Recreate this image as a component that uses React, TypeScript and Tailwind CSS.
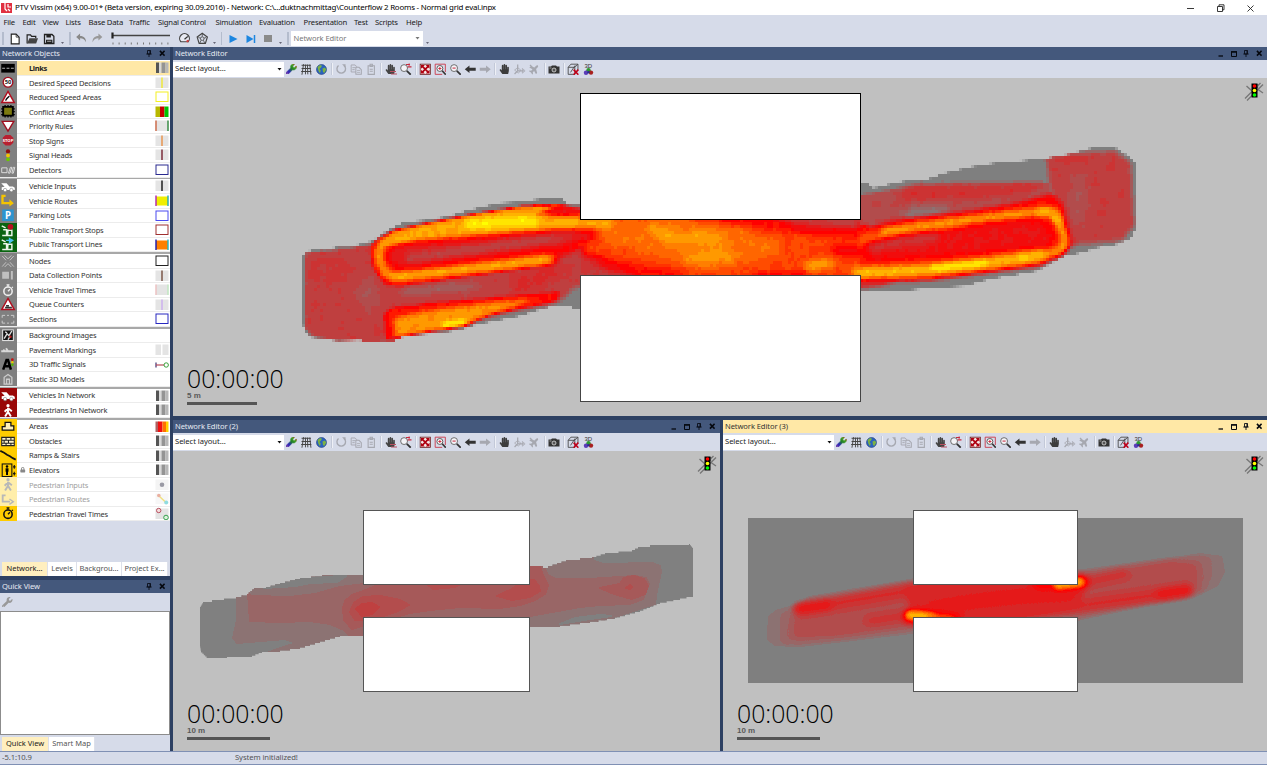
import React from "react";
import { FaWrench, FaHandPaper, FaCamera, FaPlane, FaLock } from "react-icons/fa";

type Pt = [number, number];

const gray = (v: number) => {
  const c = Math.round(v * 255);
  return `rgb(${c},${c},${c})`;
};
const pts = (p: Pt[]) => p.map((q) => q.join(",")).join(" ");

/* 21-step ramp: grey, red, orange, yellow */
const steps = Array.from({ length: 21 }, (_, i) => i / 20);
const rampR = steps.map((v) => (v < 0.5 ? 0.5 + v : 1).toFixed(3)).join(" ");
const rampG = steps.map((v) => (v < 0.5 ? 0.5 - v : (v - 0.5) * 2).toFixed(3)).join(" ");
const rampB = steps.map((v) => (v < 0.5 ? 0.5 - v : 0).toFixed(3)).join(" ");

const Ramp = () => (
  <feComponentTransfer>
    <feFuncR type="discrete" tableValues={rampR} />
    <feFuncG type="discrete" tableValues={rampG} />
    <feFuncB type="discrete" tableValues={rampB} />
  </feComponentTransfer>
);

function SharedDefs() {
  return (
    <svg width="0" height="0" className="absolute" aria-hidden="true">
      <defs>
        <filter id="ramp" filterUnits="userSpaceOnUse" x="170" y="70" width="1100" height="690" colorInterpolationFilters="sRGB">
          <Ramp />
        </filter>
        <filter id="noisyRamp" filterUnits="userSpaceOnUse" x="170" y="70" width="1100" height="350" colorInterpolationFilters="sRGB">
          <feTurbulence type="fractalNoise" baseFrequency="0.11" numOctaves="3" seed="4" />
          <feColorMatrix values="1 0 0 0 0  1 0 0 0 0  1 0 0 0 0  0 0 0 0 1" result="noise" />
          <feComposite in="SourceGraphic" in2="noise" operator="arithmetic" k1="0" k2="1" k3="0.09" k4="-0.045" />
          <feColorMatrix values="1 0 0 0 0  0 1 0 0 0  0 0 1 0 0  0 0 0 0 1" />
          <Ramp />
        </filter>
        <filter id="cells" filterUnits="userSpaceOnUse" x="173" y="78" width="1092" height="336" colorInterpolationFilters="sRGB">
          <feFlood x="174" y="79" width="1" height="1" floodColor="#000" />
          <feComposite x="173" y="78" width="3" height="3" />
          <feTile result="grid" />
          <feComposite in="SourceGraphic" in2="grid" operator="in" />
          <feMorphology operator="dilate" radius="1" />
        </filter>
        {[1, 2, 3, 5].map((n) => (
          <filter key={n} id={`b${n}`} filterUnits="userSpaceOnUse" x="170" y="70" width="1100" height="690" colorInterpolationFilters="sRGB">
            <feGaussianBlur stdDeviation={n} />
          </filter>
        ))}
        <linearGradient id="rainbow" x1="0" y1="1" x2="1" y2="0">
          <stop offset="0" stopColor="#7a30a0" />
          <stop offset="0.3" stopColor="#2828b8" />
          <stop offset="0.55" stopColor="#20802a" />
          <stop offset="0.75" stopColor="#40a020" />
          <stop offset="1" stopColor="#d02020" />
        </linearGradient>
      </defs>
    </svg>
  );
}

const mainOutline: Pt[] = [
  [303, 256], [306, 252], [312, 250], [330, 249], [336, 247], [357, 245], [372, 241], [377, 238], [388, 230], [404, 222], [426, 220], [450, 216], [465, 211], [482, 207], [499, 203], [515, 202], [540, 199], [563, 199], [568, 204], [581, 205],
  [640, 200], [860, 183], [868, 184], [874, 188], [890, 184], [905, 181], [928, 179], [945, 173], [970, 167], [995, 163], [1020, 161], [1048, 158], [1070, 154], [1084, 150], [1095, 147], [1114, 147], [1121, 151], [1129, 157], [1134, 162], [1137, 165],
  [1137, 226], [1131, 238], [1115, 245], [1095, 248], [1085, 252], [1065, 256], [1050, 264], [1037, 271], [1015, 275], [990, 279], [965, 286], [920, 289], [902, 291], [860, 291], [581, 308], [572, 308], [570, 305], [553, 306], [535, 311], [520, 316], [500, 320], [475, 325], [460, 330], [440, 333], [405, 336], [392, 342], [365, 342], [360, 340], [338, 341], [310, 337], [305, 331], [303, 325],
];

const P = ({ p, v, b }: { p: Pt[]; v: number; b?: number }) => (
  <polygon points={pts(p)} fill={gray(v)} filter={b ? `url(#b${b})` : undefined} />
);
const L = ({ d, v, w, b }: { d: string; v: number; w: number; b?: number }) => (
  <path d={d} fill="none" stroke={gray(v)} strokeWidth={w} strokeLinecap="round" strokeLinejoin="round" filter={b ? `url(#b${b})` : undefined} />
);
const E = ({ x, y, rx, ry, v, b, r = 0 }: { x: number; y: number; rx: number; ry: number; v: number; b?: number; r?: number }) => (
  <g filter={b ? `url(#b${b})` : undefined}>
    <ellipse cx={x} cy={y} rx={rx} ry={ry} fill={gray(v)} transform={`rotate(${r} ${x} ${y})`} />
  </g>
);

function MainHeat() {
  return (
    <svg className="block h-full w-full" shapeRendering="crispEdges">
      <g transform="translate(-173 -78)">
        <clipPath id="mainClip"><polygon points={pts(mainOutline)} /></clipPath>
        <g filter="url(#cells)">
          <g clipPath="url(#mainClip)">
            <g filter="url(#noisyRamp)">
              <rect x="173" y="78" width="1094" height="338" fill={gray(0)} />
              {/* left pad */}
              <P b={1} v={0.27} p={[[305, 253], [335, 250], [380, 243], [410, 341], [368, 343], [338, 341], [312, 336], [305, 328]]} />
              <E b={5} v={0.3} x={330} y={272} rx={20} ry={14} />
              {/* left room interior */}
              <P b={2} v={0.27} p={[[375, 245], [560, 210], [581, 207], [581, 283], [565, 298], [553, 304], [395, 336], [380, 336]]} />
              <E b={5} v={0.2} x={368} y={292} rx={11} ry={16} />
              <L b={5} v={0.36} w={16} d="M520 286L575 262" />
              <L b={3} v={0.1} w={6} d="M405 291L475 286" />
              {/* upper lane */}
              <P b={1} v={0.52} p={[[370, 248], [376, 240], [393, 230], [433, 222], [473, 214], [523, 206], [562, 204], [585, 212], [585, 244], [555, 264], [470, 276], [400, 286], [384, 284], [373, 268]]} />
              <L b={2} v={0.76} w={9} d="M386 242Q376 250 380 262Q385 276 398 277L460 270L520 263L550 259" />
              <L b={2} v={0.82} w={5} d="M392 277L460 270L545 259" />
              <P b={1} v={0.74} p={[[378, 243], [395, 231], [433, 223], [473, 215], [523, 207], [562, 205], [540, 212], [500, 220], [440, 232], [390, 246]]} />
              <P b={2} v={0.81} p={[[378, 246], [396, 233], [433, 224], [480, 216], [520, 210], [545, 206], [535, 214], [585, 218], [600, 229], [530, 231], [480, 235], [420, 240], [390, 245]]} />
              <L b={3} v={0.98} w={8} d="M468 225Q490 222 535 221" />
              <L b={2} v={0.42} w={5} d="M552 213L581 210" />
              <P b={3} v={0.4} p={[[388, 253], [398, 246], [450, 242], [500, 238], [575, 231], [583, 240], [500, 252], [420, 263], [394, 266]]} />
              <L b={3} v={0.22} w={8} d="M410 258L500 246L560 238" />
              {/* lower lane */}
              <P b={1} v={0.52} p={[[386, 340], [384, 314], [392, 308], [430, 303], [480, 299], [520, 295], [560, 292], [557, 301], [520, 309], [490, 314], [467, 325], [423, 332], [393, 337]]} />
              <P b={2} v={0.77} p={[[395, 337], [394, 318], [420, 312], [475, 304], [535, 299], [505, 310], [485, 316], [465, 325], [420, 333]]} />
              <L b={2} v={1} w={5} d="M443 325L464 322" />
              <E b={3} v={0} x={578} y={298} rx={8} ry={11} />
              {/* passage */}
              <P b={3} v={0.62} p={[[578, 214], [868, 218], [868, 280], [583, 284]]} />
              <P b={5} v={0.7} p={[[590, 216], [670, 217], [740, 228], [785, 243], [770, 258], [710, 270], [660, 258], [610, 246]]} />
              <L b={3} v={0.84} w={8} d="M560 223L610 223" />
              <L b={5} v={0.82} w={12} d="M655 230L670 238L720 239" />
              <L b={5} v={0.8} w={12} d="M690 258L730 254" />
              <L b={3} v={0.82} w={9} d="M808 266L830 264" />
              <P b={3} v={0.28} p={[[765, 213], [862, 213], [862, 230], [800, 230]]} />
              <L b={3} v={0.48} w={7} d="M725 219L800 228L860 236" />
              <P b={5} v={0.28} p={[[560, 252], [595, 258], [650, 282], [560, 286]]} />
              <L b={3} v={0.48} w={7} d="M600 264L680 275" />
              <E b={3} v={0.38} x={574} y={236} rx={22} ry={5} />
              <L b={2} v={0.48} w={5} d="M755 275L805 273" />
              <L b={3} v={0.44} w={9} d="M836 250L866 251" />
              {/* right room */}
              <P b={1} v={0.22} p={[[860, 195], [905, 187], [915, 185], [1000, 183], [1050, 183], [1052, 210], [860, 225]]} />
              <P b={3} v={0.32} p={[[902, 189], [918, 185], [1045, 183], [1030, 194], [950, 200], [900, 201]]} />
              <E b={3} v={0} x={925} y={213} rx={25} ry={4} r={-6} />
              <P b={2} v={0.27} p={[[1046, 157], [1075, 153], [1115, 151], [1131, 162], [1134, 226], [1121, 241], [1072, 245], [1060, 212], [1049, 183]]} />
              <E b={5} v={0.19} x={1078} y={200} rx={8} ry={28} />
              <L b={2} v={0.33} w={5} d="M1055 160L1085 158" />
              <P b={2} v={0.52} p={[[860, 228], [900, 219], [970, 211], [1020, 202], [1052, 194], [1063, 204], [1067, 222], [1073, 244], [1065, 254], [1040, 266], [990, 272], [930, 280], [860, 283]]} />
              <L b={3} v={0.7} w={9} d="M862 240L900 232L960 224" />
              <L b={2} v={0.78} w={8} d="M885 232L930 225L1000 216L1043 211Q1055 209 1058 219L1064 238Q1066 249 1050 253L1020 259" />
              <L b={2} v={0.83} w={8} d="M1040 213Q1053 210 1057 220" />
              <L b={3} v={0.86} w={12} d="M858 273L930 270L990 263L1040 255" />
              <L b={2} v={0.95} w={5} d="M932 268L985 263" />
              <P b={3} v={0.43} p={[[868, 246], [900, 236], [985, 226], [1040, 221], [1052, 239], [1046, 246], [950, 254], [872, 258]]} />
              <L b={3} v={0.28} w={7} d="M872 247L935 237" />
              <L b={2} v={0.4} w={6} d="M860 285L885 282" />
            </g>
          </g>
        </g>
        <rect x="580.5" y="93.5" width="279.500" height="125.500" fill="#fff" stroke="#000" />
        <rect x="580.5" y="275.5" width="279.500" height="126" fill="#fff" stroke="#444" />
      </g>
    </svg>
  );
}

/* resample a closed outline into cell-sized stairs */
function stairs(p: Pt[], cell: number): Pt[] {
  const out: Pt[] = [];
  p.forEach((a, i) => {
    const b = p[(i + 1) % p.length];
    const n = Math.max(1, Math.round(Math.abs(b[1] - a[1]) / cell));
    for (let k = 0; k < n; k++) {
      const x0 = a[0] + ((b[0] - a[0]) * k) / n;
      const x1 = a[0] + ((b[0] - a[0]) * (k + 1)) / n;
      const y0 = a[1] + ((b[1] - a[1]) * k) / n;
      out.push([x0, y0], [x1, y0]);
    }
  });
  return out;
}

const densOutline: Pt[] = [[200, 607], [203, 602], [212, 600], [236, 597], [247, 594], [254, 588], [266, 587], [280, 583], [300, 578], [322, 575], [364, 574], [364, 580], [530, 580], [530, 566], [543, 568], [548, 566], [566, 560], [580, 558], [592, 557], [605, 553], [632, 550], [638, 547], [650, 545], [689, 544], [693, 549], [693, 597], [680, 600], [660, 604], [640, 612], [615, 619], [590, 623], [560, 627], [530, 627], [530, 620], [364, 620], [364, 636], [349, 636], [340, 637], [320, 643], [300, 649], [280, 652], [262, 653], [252, 657], [227, 658], [208, 658], [201, 651], [200, 645]];

function DensityHeat() {
  const poly = (fill: string, p: Pt[]) => <polygon fill={fill} points={pts(p)} stroke={fill} strokeWidth="2" strokeLinejoin="round" />;
  return (
    <svg className="block h-full w-full" shapeRendering="crispEdges">
      <g transform="translate(-173 -451)">
        <clipPath id="densClip"><polygon points={pts(stairs(densOutline, 1.35))} /></clipPath>
        <g clipPath="url(#densClip)">
          <rect x="195" y="540" width="500" height="125" fill="#808080" />
          {poly("#8c7373", [[237, 597], [247, 593], [256, 587], [290, 577], [322, 573], [366, 572], [530, 560], [592, 556], [594, 561], [604, 564], [652, 563], [660, 566], [661, 572], [657, 590], [655, 604], [600, 622], [560, 629], [364, 637], [280, 655], [262, 655], [280, 648], [297, 643], [285, 639], [237, 643], [233, 638], [237, 620]])}
          {poly("#808080", [[262, 587], [290, 580], [320, 577], [346, 576], [337, 582], [310, 583], [296, 586], [264, 588]])}
          {poly("#808080", [[560, 624], [575, 618], [600, 615], [611, 616], [590, 619]])}
          {poly("#996666", [[248, 592], [251, 596], [290, 597], [315, 594], [340, 587], [364, 584], [530, 560], [544, 567], [548, 575], [556, 579], [590, 579], [635, 576], [646, 578], [649, 584], [643, 599], [630, 604], [600, 605], [580, 607], [530, 616], [500, 621], [364, 637], [350, 636], [344, 630], [330, 624], [310, 621], [280, 622], [250, 621]])}
          {poly("#a65959", [[343, 608], [345, 601], [352, 595], [366, 590], [380, 584], [530, 560], [540, 567], [543, 575], [548, 585], [545, 594], [535, 600], [520, 605], [500, 608], [460, 607], [430, 610], [410, 613], [385, 620], [364, 625], [352, 629], [344, 620]])}
          {poly("#a65959", [[600, 588], [620, 584], [624, 578], [634, 576], [644, 579], [648, 586], [645, 594], [632, 599], [614, 594]])}
          {poly("#b34d4d", [[350, 612], [354, 603], [363, 597], [380, 596], [400, 600], [409, 605], [398, 611], [380, 617], [366, 620], [355, 620]])}
          {poly("#b34d4d", [[497, 596], [512, 589], [524, 580], [534, 580], [539, 586], [540, 591], [530, 597], [512, 600]])}
          {poly("#bf4040", [[356, 609], [362, 604], [372, 603], [379, 607], [372, 614], [362, 616]])}
          {poly("#b34d4d", [[626, 588], [630, 585], [632, 587], [630, 589]])}
          <path d="M425 584h38l-8 4-22 2z" fill="#b34d4d" />
        </g>
        <rect x="363.5" y="510.5" width="166" height="73.500" fill="#fff" stroke="#555" />
        <rect x="363.5" y="617.5" width="166" height="74" fill="#fff" stroke="#555" />
      </g>
    </svg>
  );
}

function SpeedHeat() {
  return (
    <svg className="block h-full w-full">
      <g transform="translate(-723 -451)">
        <clipPath id="spClip"><rect x="748" y="518" width="495" height="165" /></clipPath>
        <g clipPath="url(#spClip)">
          <g filter="url(#ramp)">
            <rect x="740" y="510" width="510" height="180" fill={gray(0.02)} />
            <P b={1} v={0.09} p={[[767, 640], [768, 616], [776, 610], [800, 603], [810, 596], [913, 579], [1078, 570], [1180, 557], [1200, 553], [1222, 556], [1225, 572], [1218, 586], [1195, 597], [1150, 604], [1078, 621], [913, 634], [800, 647], [775, 646]]} />
            <P b={2} v={0.14} p={[[782, 640], [782, 616], [798, 606], [913, 582], [1078, 573], [1190, 557], [1209, 559], [1210, 575], [1203, 592], [1078, 617], [913, 629], [800, 643], [785, 643]]} />
            <P b={3} v={0.23} p={[[793, 638], [795, 608], [830, 600], [913, 584], [1078, 576], [1170, 561], [1197, 564], [1198, 590], [1170, 598], [1078, 613], [913, 626], [840, 636]]} />
            <L b={3} v={0.34} w={12} d="M803 609L913 590L1000 582" />
            <L b={3} v={0.43} w={8} d="M798 609L828 605" />
            <L b={3} v={0.32} w={8} d="M870 621L915 614" />
            <L b={3} v={0.34} w={12} d="M1185 591L1078 606L1000 616" />
            <L b={3} v={0.43} w={8} d="M1160 594L1188 590" />
            <L b={3} v={0.32} w={8} d="M1080 584L1125 574" />
            <P b={3} v={0.38} p={[[905, 588], [960, 580], [1080, 580], [1085, 592], [1078, 606], [1000, 621], [913, 620]]} />
            <L b={3} v={0.43} w={6} d="M930 609Q990 596 1070 594" />
            <L b={3} v={0.52} w={13} d="M909 617L955 619" />
            <L b={3} v={0.52} w={13} d="M1083 582L1038 583" />
            <L b={2} v={0.84} w={9} d="M910 615Q922 615 932 618" />
            <L b={2} v={0.8} w={9} d="M1080 582L1058 585" />
            <L b={2} v={0.68} w={5} d="M930 617L950 619" />
          </g>
        </g>
        <g shapeRendering="crispEdges">
          <rect x="913.5" y="510.5" width="164" height="73.500" fill="#fff" stroke="#555" />
          <rect x="913.5" y="617.5" width="164" height="74" fill="#fff" stroke="#555" />
        </g>
      </g>
    </svg>
  );
}

/* ---------- toolbar glyphs ---------- */
const G = ({ children, s = 12.5 }: { children: React.ReactNode; s?: number }) => (
  <svg width={s} height={s} viewBox="0 0 16 16" fill="none">{children}</svg>
);

const Magnifier = ({ children }: { children?: React.ReactNode }) => (
  <G>
    <circle cx="6.5" cy="6.5" r="4.4" fill="#f4f4f8" stroke="#666" strokeWidth="1.2" />
    <path d="M10 10l5 5" stroke="#333" strokeWidth="2.2" />
    {children}
  </G>
);

const Sep = () => <span className="mx-[1.6px] h-[12px] w-[1px] shrink-0 bg-[#c3c9d8] shadow-[1px_0_0_#eef0f6]" />;
const Slot = ({ children }: { children: React.ReactNode }) => (
  <span className="flex w-[15.1px] shrink-0 items-center justify-center">{children}</span>
);

function EditorToolbar() {
  return (
    <div className="flex h-[18px] shrink-0 items-center bg-[#d6dbe9]">
      <div className="flex h-[15px] w-[111px] shrink-0 items-center justify-between bg-white pl-[2px] pr-[2px] text-[#222]">
        <span className="text-[7.6px] tracking-[-0.04px]">Select layout...</span>
        <svg width="5" height="3" viewBox="0 0 5 3"><path d="M.5 0h4L2.500 2.500z" fill="#111" /></svg>
      </div>
      <Slot><FaWrench size={10.5} style={{ fill: "url(#rainbow)", stroke: "url(#rainbow)", strokeWidth: 30 }} /></Slot>
      <Slot><G><path d="M2 3h12M2 7h12M1.500 11h13" stroke="#444" strokeWidth="1.300" /><path d="M4.500 1.500L2.500 15M7 2v12.500M9.500 2l.5 12.500M12.500 2l1.500 13" stroke="#444" strokeWidth="1.200" /></G></Slot>
      <Slot><svg width="11" height="11" viewBox="0 0 11 11"><circle cx="5.500" cy="5.500" r="5" fill="#2a62c0" stroke="#24407c" strokeWidth=".6" /><path d="M1.500 3L4 1l2 .7-1 1.800L3.500 5l1.200 1.500-.7 2.700L2.500 7zM6.500 4.500l2.500-1 1.200 2-1.700 3.300L7 8.200z" fill="#7cb244" /></svg></Slot>
      <Sep />
      <Slot><G><path d="M4.500 3.200A5.500 5.500 0 1 0 11.500 3.200" stroke="#a6a8b0" strokeWidth="1.700" /><path d="M9 1.500h4.500v4.500z" fill="#a6a8b0" /></G></Slot>
      <Slot><G><path d="M1.500 2.500h5l2 2v7h-7zM3 6h4M3 8.500h3" stroke="#a6a8b0" strokeWidth="1.200" /><path d="M7.500 5.500h4l3 3v6h-7z" fill="#d6dbe9" stroke="#a6a8b0" strokeWidth="1.300" /><path d="M9 9.500h4M9 12h4" stroke="#a6a8b0" /></G></Slot>
      <Slot><G><path d="M4 3.500h8v11H4z" stroke="#a6a8b0" strokeWidth="1.400" /><path d="M6.500 1.500h3v3h-3zM6 8h4M6 10.500h4" stroke="#a6a8b0" strokeWidth="1.300" /></G></Slot>
      <Sep />
      <Slot><span className="relative flex"><FaHandPaper size={10.5} color="#444" /><svg className="absolute -bottom-[1px] -right-[1px]" width="7" height="5" viewBox="0 0 7 5"><path d="M0 1.500h6M1 4h6" stroke="#b85060" strokeWidth="1.200" /></svg></span></Slot>
      <Slot><Magnifier><path d="M9 2h5M11 5h5M13 .5v3" stroke="#c8283c" strokeWidth="1.400" /></Magnifier></Slot>
      <Sep />
      <Slot><G><rect x="1.500" y="1.500" width="13" height="13" fill="#f4e8e8" stroke="#611" strokeWidth="1" /><path d="M4 4l8 8M12 4l-8 8" stroke="#b00010" strokeWidth="2.200" /><path d="M2.500 2.500h5l-5 5zM13.500 2.500v5l-5-5zM2.500 13.500v-5l5 5zM13.500 13.500h-5l5-5z" fill="#b00010" /></G></Slot>
      <Slot><G><path d="M1.500 1.500h13v10M1.500 1.500v13h9" stroke="#c83040" strokeWidth="1.100" /><circle cx="7.500" cy="7" r="3.800" fill="#fff" stroke="#555" strokeWidth="1.200" /><path d="M5.500 7h4M7.500 5v4" stroke="#c8283c" strokeWidth="1.200" /><path d="M10.500 10l4.500 5" stroke="#333" strokeWidth="2" /></G></Slot>
      <Slot><Magnifier><path d="M4.500 6.500h4" stroke="#c8283c" strokeWidth="1.300" /></Magnifier></Slot>
      <Slot><G><path d="M1 8l6-4.800v3h8v3.600H7v3z" fill="#333" /></G></Slot>
      <Slot><G><path d="M15 8L9 3.200v3H1v3.600h8v3z" fill="#a6a8b0" /></G></Slot>
      <Sep />
      <Slot><FaHandPaper size={10.5} color="#3c3c3c" /></Slot>
      <Slot><G><path d="M6 2v8L2 14M6 10h8" stroke="#a6a8b0" strokeWidth="1.600" /><path d="M2 9l4-3 4 3-3 4zM12 7l3.500 3-3.500 3z" stroke="#a6a8b0" /></G></Slot>
      <Slot><span className="relative flex"><FaPlane size={10.5} color="#a6a8b0" className="-rotate-45" /><svg className="absolute left-0 top-0" width="10" height="10" viewBox="0 0 10 10"><path d="M1 1l4 4" stroke="#a6a8b0" strokeWidth="1.300" /></svg></span></Slot>
      <Sep />
      <Slot><svg width="12" height="9" viewBox="0 0 12 9"><path d="M.5 1.500H3L4 .5h4l1 1h2.500v7H.5z" fill="#333" /><circle cx="6" cy="5" r="2" fill="#555" stroke="#ddd" strokeWidth=".8" /><path d="M1.500 3h2" stroke="#bbb" strokeWidth=".8" /></svg></Slot>
      <Sep />
      <Slot><G><path d="M1.500 5.500h8.500v9H1.500zM1.500 5.500L5 1.500h9v8M10 5.500l4-4M4.500 12l6-9" stroke="#444" strokeWidth="1.100" /><path d="M8.500 8.500l6 6.500M14.500 8.500l-6 6.500" stroke="#c00018" strokeWidth="2" /></G></Slot>
      <Slot><span className="flex flex-col items-center pt-[1px]"><span className="h-[4.5px] font-['Liberation_Sans'] text-[6px] leading-[5px] text-[#333]">3D</span><svg width="11" height="7" viewBox="0 0 11 7"><circle cx="5.500" cy="2.300" r="2.200" fill="#2c9a30" /><circle cx="3" cy="4.700" r="2.200" fill="#5a3cb8" /><circle cx="8" cy="4.600" r="2.200" fill="#a82020" /><circle cx="5.500" cy="4.200" r="1.200" fill="#24308c" /></svg></span></Slot>
    </div>
  );
}

const Pin = () => (
  <svg width="6" height="7" viewBox="0 0 6 7"><path d="M1.500 .5h3v3.500h-3zM.3 4h5.400M3 4v3" fill="none" stroke="#0a0f1a" strokeWidth=".9" /><path d="M3.500 .5h1V4h-1z" fill="#0a0f1a" /></svg>
);
const Cross = () => <svg width="6.500" height="6.500" viewBox="0 0 7 7"><path d="M1 1l5 5M6 1L1 6" stroke="#05080f" strokeWidth="1.700" /></svg>;

function Header({ title, active, full }: { title: string; active?: boolean; full?: boolean }) {
  return (
    <div className={`flex h-[13px] shrink-0 items-center justify-between pl-[2px] ${active ? "bg-[#ffe8a6] text-[#333]" : "bg-[#44587c] text-[#e6eaf2]"}`}>
      <span className="text-[7.6px] leading-[13px] tracking-[-0.1px]">{title}</span>
      <div className="flex items-center pr-[2px]">
        {full && (
          <>
            <span className="flex w-[12.5px] justify-center"><svg width="6" height="6" viewBox="0 0 6 6"><path d="M.5 5h4.500" stroke="#05080f" strokeWidth="1.300" /></svg></span>
            <span className="flex w-[12.5px] justify-center"><svg width="6" height="6" viewBox="0 0 6 6"><path d="M.5 1h5v4.500h-5z" fill="none" stroke="#05080f" /><path d="M0 .8h6" stroke="#05080f" strokeWidth="1.400" /></svg></span>
          </>
        )}
        <span className="flex w-[12.5px] justify-center"><Pin /></span>
        <span className="flex w-[12.5px] justify-center"><Cross /></span>
      </div>
    </div>
  );
}

function Editor({ title, active, scale, barClass, children }: { title: string; active?: boolean; scale: string; barClass: string; children: React.ReactNode }) {
  return (
    <section className="flex min-h-0 min-w-0 flex-1 flex-col">
      <Header title={title} active={active} full />
      <EditorToolbar />
      <div className="relative min-h-0 flex-1 overflow-hidden bg-[#c0c0c0]">
        {children}
        <svg className="absolute right-[3px] top-[3px]" width="20" height="20" viewBox="0 0 20 20">
          <path d="M1 17.500L16.500 2M3 19.500L19 3.500M2.500 5l5.500 5M14 8.500l5 3.500M13.500 7V3" stroke="#777" strokeWidth="1.400" fill="none" />
          <rect x="7.500" y="2.500" width="6" height="14" fill="#000" />
          <circle cx="10.500" cy="5" r="1.800" fill="#f00" /><circle cx="10.500" cy="9.500" r="1.800" fill="#ff0" /><circle cx="10.500" cy="14" r="1.800" fill="#0f0" />
        </svg>
        <div className="absolute bottom-[11px] left-[14px] flex flex-col items-start">
          <span className="h-[27px] font-['Open_Sans','Noto_Sans',sans-serif] text-[24.8px] font-[350] leading-[27px] text-black">00:00:00</span>
          <span className="h-[8px] font-['Liberation_Sans'] text-[8px] font-bold leading-[8px] text-[#5a5a5a]">{scale}</span>
          <span className={`mt-[2px] h-[3px] bg-[#555] ${barClass}`} />
        </div>
      </div>
    </section>
  );
}

/* ---------- object list ---------- */
const carBody = <><path d="M1 4.500h5.500l3 3.200h3.500l2 1.300v2.500H1.500V8.500l3-.5z" fill="#fff" /><circle cx="5" cy="11.500" r="1.800" fill="#fff" stroke="#777" strokeWidth=".6" /><circle cx="11.500" cy="11.500" r="1.800" fill="#fff" stroke="#777" strokeWidth=".6" /></>;

const kindIcons: Record<string, React.ReactNode> = {
  links: <><rect x="1" y="3" width="14" height="9" fill="#000" /><path d="M2 7.500h12" stroke="#bbb" strokeDasharray="3 1.500" /></>,
  speed: <><circle cx="8" cy="7.500" r="5" fill="#fff" stroke="#a01020" strokeWidth="1.400" /><text x="8" y="9.800" fontSize="6" fontWeight="bold" textAnchor="middle" fill="#222">50</text></>,
  tri: <><path d="M8 1.500L14.500 13h-13z" fill="#fff" stroke="#b01020" strokeWidth="1.500" /><path d="M5.500 11c1-3 2-3 4-4.500" stroke="#111" strokeWidth="1.500" fill="none" /></>,
  conflict: <><path d="M3 3h10v9H3z" fill="#7c7a10" stroke="#000" strokeWidth="2" /><path d="M5 1v2M8 1v2M11 1v2M5 12v2M8 12v2M11 12v2M1 5h2M1 8h2M13 5h2M13 8h2M1 11h2M13 11h2" stroke="#000" strokeWidth="1.300" /></>,
  yield: <path d="M2 2.500h12L8 12.500z" fill="#fff" stroke="#a01020" strokeWidth="1.400" />,
  stop: <><path d="M5.500 2h5l3 3v5l-3 3h-5l-3-3V5z" fill="#b82030" /><text x="8" y="9.200" fontSize="4.300" fontWeight="bold" textAnchor="middle" fill="#fff">STOP</text></>,
  signal: <><circle cx="8" cy="3.500" r="2.200" fill="#8c1010" /><circle cx="8" cy="7.700" r="2" fill="#f5c400" /><circle cx="8" cy="11.700" r="2" fill="#6cc800" /></>,
  detector: <path d="M1.500 5h5.500v5H1.500zM8.500 10.500l2-6h1.500l-2 6zM12 10.500l1.500-6h1.500l-1.500 6z" fill="none" stroke="#ddd" />,
  car: carBody,
  route: <><path d="M5.500 3H2.300v7.500H10" fill="none" stroke="#f5c400" strokeWidth="2.400" /><path d="M9.500 6.500L14 10.500l-4.500 3.500z" fill="#f5c400" /></>,
  parking: <><rect x="2" y="1.500" width="12" height="12" fill="#2d94cf" /><text x="8" y="11.300" fontSize="10" fontWeight="bold" textAnchor="middle" fill="#fff">P</text></>,
  ptstop: <><path d="M3 7h3.500v6M8 7.500h4V13H7.500zM2 13h10M1.500 3l4 2" stroke="#eaf6ea" strokeWidth="1.500" fill="none" /><circle cx="10.500" cy="4" r="3" fill="#b81020" /></>,
  ptline: <><path d="M3 7h3.500v6M8 7.500h4V13H7.500zM2 13h10M1.500 3l4 2" stroke="#eaf6ea" strokeWidth="1.500" fill="none" /><path d="M6 3.500h4M9.500 1.500l3.500 2-3.500 2.500z" stroke="#4ac4f0" strokeWidth="1.300" fill="#4ac4f0" /></>,
  nodes: <path d="M2 2l4 4.500M2 13l4-4.500M14 2l-4 4.500M14 13l-4-4.500M4.500 1.500L8 5l3.500-3.500M4.500 13.500L8 10l3.500 3.500" fill="none" stroke="#ccc" strokeWidth=".9" />,
  data: <path d="M2 4h7v7H2zM11 3h2v9h-2z" fill="#c0c0c0" />,
  watch: <><circle cx="8" cy="8.500" r="4.300" fill="none" stroke="currentColor" strokeWidth="1.600" /><path d="M8 8.500l2-2M6.500 2h3M8 2v2M12 4l1 1" stroke="currentColor" strokeWidth="1.400" /></>,
  queue: <><path d="M8 1.500L14.500 13h-13z" fill="#fff" stroke="#b01020" strokeWidth="1.500" /><path d="M5 11h7M6 9h3" stroke="#333" strokeWidth="1.700" /></>,
  sections: <path d="M2 6V3.500h3M7 3.500h2M11 3.500h3V6M14 9v2.500h-3M9 11.500H7M5 11.500H2V9" fill="none" stroke="#ccc" />,
  background: <><rect x="2.500" y="2" width="11" height="11" fill="#111" stroke="#eee" /><path d="M4 11l3-5 2 2 3-5M5 4l2 1M8 12l2-3" stroke="#ddd" strokeWidth="1.400" fill="none" /><circle cx="10.500" cy="9" r="1.300" fill="#c02020" /></>,
  pavement: <path d="M1 8.500h13M6 5.500l2 3M3 7l2 1.500" stroke="#d8d8d8" strokeWidth="2" />,
  signal3d: <><path d="M3 13L6.500 3h1.500L11 13M4.500 9.500h5" stroke="#000" strokeWidth="2.600" fill="none" /><circle cx="12.500" cy="2.800" r="1.400" fill="#c01010" /><circle cx="12.500" cy="5.500" r="1.300" fill="#e8c800" /><circle cx="12.500" cy="8" r="1.300" fill="#50b800" /></>,
  static3d: <path d="M4 12.500V5.500L8 2.500l4 3v7zM6.500 12V7.500h3V12" fill="none" stroke="#ccc" strokeWidth="1.300" />,
  ped: <><circle cx="8" cy="2.800" r="1.700" fill="currentColor" /><path d="M8 5v4M8 5.500L4.500 9M8 5.500l4 3M8 9l-3 5M8 9l3 5" stroke="currentColor" strokeWidth="2" fill="none" /></>,
  areas: <path d="M2 11.500h12V7h-3V3.500H5V8H2z" fill="#fff0b8" stroke="#111" strokeWidth="1.300" />,
  obstacles: <path d="M1.500 3.500h13v8.500h-13zM1.500 6.500h13M1.500 9.500h13M6 3.500v3M11 3.500v3M8.500 6.500v3M4 6.500v3M6 9.500V12M11 9.500V12" fill="#fff4cc" stroke="#222" strokeWidth="1.100" />,
  ramps: <path d="M0 3l4 2 3 2 3 1.500 3 2 3 1.500" fill="none" stroke="#111" strokeWidth="1.800" />,
  elevators: <><rect x="2" y="1" width="10" height="13" fill="none" stroke="#111" strokeWidth="1.100" /><circle cx="7" cy="3.700" r="1.300" /><path d="M5.500 5.500h3V9h-.5v3.500H6V9h-.5z" /><path d="M14.500 2v4M14.500 9v4M13.200 4h2.600M13.200 11h2.600" stroke="#111" strokeWidth="1.100" /></>,
  proute: <><path d="M5.500 3.500H2.500v6.500H10" fill="none" stroke="#b8b8b8" strokeWidth="1.900" /><path d="M9.500 7.200l4 2.800-4 2.800" fill="none" stroke="#b8b8b8" strokeWidth="1.400" /></>,
};

const box = (c: string) => <rect x="1" y="2" width="12" height="9.500" fill="#fff" stroke={c} strokeWidth="1" />;
const mid = (c: string) => <><rect x=".5" y="1.500" width="13" height="10.500" fill="#e4e4e4" /><path d="M7 1.500V12" stroke={c} strokeWidth="1.300" /></>;
const tones = <><rect x="1" y="1.500" width="3" height="10.500" fill="#555" /><rect x="4" y="1.500" width="2.500" height="10.500" fill="#d8d8d8" /><rect x="6.500" y="1.500" width="4" height="10.500" fill="#949494" /><rect x="10.500" y="1.500" width="3" height="10.500" fill="#b8b8b8" /></>;

interface Item { t: string; i: string; bg?: string; s?: React.ReactNode; sel?: boolean; dim?: boolean; lock?: boolean; c?: string }
const DG = "bg-[#0a6410]";
const DR = "bg-[#990808]";
const YE = "bg-[#ffcc00]";
const groups: Item[][] = [
  [
    { t: "Links", i: "links", s: tones, sel: true },
    { t: "Desired Speed Decisions", i: "speed", s: mid("#f0e820") },
    { t: "Reduced Speed Areas", i: "tri", s: box("#f4f020") },
    { t: "Conflict Areas", i: "conflict", s: <><rect x=".5" y="1.500" width="4.500" height="10.500" fill="#b8b800" /><rect x="5" y="1.500" width="4.500" height="10.500" fill="#c80000" /><rect x="9.500" y="1.500" width="4" height="10.500" fill="#00c400" /></> },
    { t: "Priority Rules", i: "yield", s: <><rect x=".5" y="1.500" width="13" height="10.500" fill="#e4e4e4" /><path d="M1 1.500V12" stroke="#c85028" strokeWidth="1.200" /><path d="M13 1.500V12" stroke="#107820" strokeWidth="1.200" /></> },
    { t: "Stop Signs", i: "stop", s: mid("#e88838") },
    { t: "Signal Heads", i: "signal", s: mid("#6a1020") },
    { t: "Detectors", i: "detector", s: box("#2a2a90") },
  ],
  [
    { t: "Vehicle Inputs", i: "car", s: mid("#000") },
    { t: "Vehicle Routes", i: "route", s: <><rect x="1" y="2.500" width="12" height="9" fill="#f0ee00" /><path d="M1 1.500V12" stroke="#b020b0" strokeWidth="1.400" /><path d="M13 1.500V12" stroke="#20a8b8" strokeWidth="1.400" /></> },
    { t: "Parking Lots", i: "parking", s: box("#4a4af0") },
    { t: "Public Transport Stops", i: "ptstop", bg: DG, s: box("#a03030") },
    { t: "Public Transport Lines", i: "ptline", bg: DG, s: <><rect x="1" y="2.500" width="12" height="9" fill="#ff8000" /><path d="M1 1.500V12" stroke="#1818b0" strokeWidth="1.400" /><path d="M13 1.500V12" stroke="#20b8c8" strokeWidth="1.400" /></> },
  ],
  [
    { t: "Nodes", i: "nodes", s: box("#222") },
    { t: "Data Collection Points", i: "data", s: mid("#6a4030") },
    { t: "Vehicle Travel Times", i: "watch", c: "text-[#eeeeee]", s: <><rect x=".5" y="1.500" width="13" height="10.500" fill="#e4e4e4" /><path d="M1 1.500V12" stroke="#f0b0b0" /><path d="M13 1.500V12" stroke="#b0e8b0" /></> },
    { t: "Queue Counters", i: "queue", s: mid("#c8a8f0") },
    { t: "Sections", i: "sections", s: box("#2828c0") },
  ],
  [
    { t: "Background Images", i: "background" },
    { t: "Pavement Markings", i: "pavement", s: <><rect x=".5" y="1.500" width="5.500" height="10.500" fill="#e4e4e4" /><rect x="7.500" y="1.500" width="6" height="10.500" fill="#e4e4e4" /></> },
    { t: "3D Traffic Signals", i: "signal3d", s: <><path d="M1 4.500v5" stroke="#403070" strokeWidth="1.200" /><path d="M1 7h8" stroke="#b84858" strokeWidth="1.200" /><circle cx="11.200" cy="7" r="2.200" fill="#fff" stroke="#38a038" /></> },
    { t: "Static 3D Models", i: "static3d" },
  ],
  [
    { t: "Vehicles In Network", i: "car", bg: DR, s: tones },
    { t: "Pedestrians In Network", i: "ped", bg: DR, c: "text-white", s: tones },
  ],
  [
    { t: "Areas", i: "areas", bg: YE, s: <><rect x=".5" y="1.500" width="3" height="10.500" fill="#b06060" /><rect x="3" y="1.500" width="4.500" height="10.500" fill="#f01010" /><rect x="7.500" y="1.500" width="3.500" height="10.500" fill="#ff7000" /><rect x="11" y="1.500" width="2.500" height="10.500" fill="#ffd000" /></> },
    { t: "Obstacles", i: "obstacles", bg: YE, s: tones },
    { t: "Ramps & Stairs", i: "ramps", bg: YE, s: tones },
    { t: "Elevators", i: "elevators", bg: YE, s: tones, lock: true },
    { t: "Pedestrian Inputs", i: "ped", bg: "bg-[#ffeeaa]", c: "text-[#b8b8b8]", dim: true, s: <><rect x=".5" y="1.500" width="13" height="10.500" fill="#f4f4f4" /><circle cx="7" cy="6.800" r="2.300" fill="#9a9aa4" /></> },
    { t: "Pedestrian Routes", i: "proute", bg: "bg-[#ffeeaa]", dim: true, s: <><rect x=".5" y="1.500" width="13" height="10.500" fill="#f7f7f7" /><path d="M4 4l7 6.500" stroke="#f0e080" strokeWidth="1.500" /><circle cx="3.800" cy="3.500" r="1.800" fill="#eab0a0" /><circle cx="11.200" cy="10.500" r="2" fill="#90dce0" /></> },
    { t: "Pedestrian Travel Times", i: "watch", bg: YE, c: "text-[#111111]", s: <><rect x=".5" y="1.500" width="13" height="10.500" fill="#e4e4e4" /><circle cx="3.700" cy="3.500" r="2.200" fill="#f4dcdc" stroke="#b85060" /><circle cx="11" cy="10.500" r="2.300" fill="#dcf4dc" stroke="#38a050" /></> },
  ],
];

function ObjectList() {
  return (
    <div className="flex flex-col bg-white pt-[1.2px]">
      {groups.map((g, gi) => (
        <React.Fragment key={gi}>
          {gi > 0 && <div className="h-[1.85px] bg-[#a8a8a8]" />}
          {g.map((it) => (
            <div key={it.t} className={`flex h-[14.55px] items-center border-b border-[#ececec] ${it.sel ? "bg-[#ffe8a6]" : "bg-white"}`}>
              <span className={`flex h-[14.55px] w-[17px] shrink-0 items-center ${it.bg ?? "bg-[#808080]"} ${it.c ?? ""}`}>
                <svg width="16" height="14.500" viewBox="0 0 16 15">{kindIcons[it.i]}</svg>
              </span>
              <span className="flex w-[12px] shrink-0 items-center justify-center">{it.lock && <FaLock size={5.5} color="#888" />}</span>
              <span className={`flex-1 text-[7.5px] leading-[14px] ${it.sel ? "font-bold tracking-[-0.35px] text-[#222]" : it.dim ? "tracking-[-0.2px] text-[#a0a0a0]" : "tracking-[-0.2px] text-[#333]"}`}>{it.t}</span>
              <svg className="mr-[1.5px] shrink-0" width="14" height="13.500" viewBox="0 0 14 13.500">{it.s}</svg>
            </div>
          ))}
        </React.Fragment>
      ))}
    </div>
  );
}

const menu: [string, number][] = [["File", 19], ["Edit", 20], ["View", 23], ["Lists", 23], ["Base Data", 40.5], ["Traffic", 29], ["Signal Control", 57.5], ["Simulation", 43.5], ["Evaluation", 44.5], ["Presentation", 50.5], ["Test", 21], ["Scripts", 31], ["Help", 20]];

const Grip = () => <span className="mr-[2px] h-[13px] w-[1.500px] shrink-0 bg-[#b4bccd]" />;
const Over = () => <svg className="mt-[8px] shrink-0" width="5" height="4" viewBox="0 0 5 4"><path d="M1 1h3L2.500 3z" fill="#667" /></svg>;

function MainToolbar() {
  return (
    <div className="flex h-[17px] shrink-0 items-center bg-[#d6dbe9] pl-[2px]">
      <Grip />
      <span className="flex w-[17.5px] justify-center pl-[2px]"><G s={12}><path d="M3 1.500h6.500l4 4v9H3z" fill="#fff" stroke="#222" strokeWidth="1.500" /><path d="M9.500 1.500v4h4" stroke="#222" /></G></span>
      <span className="flex w-[17px] justify-center"><G s={12}><path d="M1.500 14V2.500h4.500l1.500 2h5.500V7" stroke="#222" strokeWidth="1.600" /><path d="M1.500 14L4.500 7H16l-2.500 7z" fill="#444" /></G></span>
      <span className="flex w-[17px] justify-center"><G s={12}><path d="M2 2h10l2.500 2.500V14H2z" stroke="#222" strokeWidth="1.700" /><path d="M4.500 2h6v4h-6zM4 9h8.500v5H4z" fill="#222" /><path d="M5.500 11h5.500" stroke="#ddd" /></G></span>
      <span className="ml-[3px]"><Over /></span>
      <span className="ml-[4px] flex"><Grip /></span>
      <span className="flex w-[16px] justify-center pl-[1px]"><G s={12.5}><path d="M6.500 2L1.500 6.500l5 4.500V8c4 0 6 1.500 7.500 5 .3-5-2.500-8-7.500-8z" fill="#888" /></G></span>
      <span className="flex w-[17px] justify-center"><G s={12.5}><path d="M9.500 2l5 4.500-5 4.500V8C5.500 8 3.500 9.500 2 13c-.3-5 2.500-8 7.500-8z" fill="#999" /></G></span>
      <svg className="ml-[5.5px] shrink-0" width="60" height="15" viewBox="0 0 60 15"><path d="M1 4.500h58" stroke="#444" strokeWidth="1.300" /><path d="M1.500 1.500v6" stroke="#222" strokeWidth="2.200" /><path d="M1.500 12.500h57" stroke="#777" strokeWidth="2" strokeDasharray="1 5.100" /></svg>
      <span className="ml-[4.5px] flex w-[18px] justify-center"><G s={13}><path d="M3.500 12A6 6 0 1 1 12.500 12z" stroke="#444" strokeWidth="1.500" fill="#e8eaf2" /><path d="M8 9l4-3.500" stroke="#333" strokeWidth="1.500" /><path d="M11 9.500l2.500.5-1 3-2.500-1z" fill="#d04040" /></G></span>
      <span className="flex w-[17px] justify-center"><G s={12.5}><path d="M8 1.500l6.500 5-2.500 8H4L1.500 6.500z" stroke="#444" strokeWidth="1.500" /><circle cx="8" cy="8.500" r="2.300" stroke="#444" /><path d="M8 2v4M3 7l3 1M13 7l-3 1M5 14l1.500-3.500M11 14l-1.500-3.500" stroke="#444" /></G></span>
      <span className="ml-[1px] flex"><Over /></span>
      <span className="ml-[4px] flex"><Grip /></span>
      <span className="flex w-[18.5px] justify-center"><svg width="9" height="8" viewBox="0 0 9 8"><path d="M.5 0l8 4-8 4z" fill="#1c86e0" /></svg></span>
      <span className="flex w-[17px] justify-center"><svg width="10" height="8" viewBox="0 0 10 8"><path d="M.5 0l7 4-7 4z" fill="#1c86e0" /><path d="M8.500 0v8" stroke="#1c86e0" strokeWidth="1.500" /></svg></span>
      <span className="flex w-[17px] justify-center"><span className="h-[7.500px] w-[7.500px] bg-[#8a8a8a]" /></span>
      <span className="ml-[1.5px] flex"><Over /></span>
      <span className="ml-[4px] flex"><Grip /></span>
      <div className="flex h-[15px] w-[132px] shrink-0 items-center justify-between bg-white px-[3px] text-[7.6px] text-[#777]">
        <span className="tracking-[-0.08px]">Network Editor</span>
        <svg width="5" height="3" viewBox="0 0 5 3"><path d="M.5 0h4L2.500 2.500z" fill="#777" /></svg>
      </div>
      <span className="ml-[2px] flex"><Over /></span>
    </div>
  );
}

const Tab = ({ children, on, w }: { children: React.ReactNode; on?: boolean; w: number }) => (
  <span style={{ width: w }} className={`flex h-full shrink-0 items-center justify-center border-r border-[#dde0ea] text-[7.5px] tracking-[-0.03px] ${on ? "bg-[#ffefbf] text-[#222]" : "bg-white text-[#555]"}`}>{children}</span>
);

export default function App() {
  return (
    <div className="flex h-[765px] w-[1267px] flex-col overflow-hidden whitespace-nowrap bg-[#2d4062] font-['Noto_Sans','Open_Sans',sans-serif] text-[7.6px]">
      <SharedDefs />
      <div className="flex h-[15px] shrink-0 items-center bg-white">
        <span className="ml-[1px] mr-[3px] flex h-[10px] w-[11px] items-center justify-center bg-[#e03040]">
          <svg width="8" height="9" viewBox="0 0 8 9"><path d="M2 0v6l2 2M5 1v3h3M5 6l2 2" stroke="#fff" strokeWidth="1.200" fill="none" /></svg>
        </span>
        <span className="flex-1 text-[7.900px] leading-[15px] tracking-[-0.215px] text-black">PTV Vissim (x64) 9.00-01* (Beta version, expiring 30.09.2016) - Network: C:\...duktnachmittag\Counterflow 2 Rooms - Normal grid eval.inpx</span>
        <svg width="80" height="12" viewBox="0 0 80 12" fill="none" stroke="#222" strokeWidth=".9" className="shrink-0">
          <path d="M0 6.500h7M30.500 4.500h5v5h-5zM32 4.500v-1.700h5v5h-1.500M60.500 3.500l6 6M66.500 3.500l-6 6" />
        </svg>
      </div>
      <div className="flex h-[15px] shrink-0 items-center bg-[#d6dbe9] pl-[3.5px] text-[7.700px] tracking-[-0.2px] text-[#1a1a1a]">
        {menu.map(([m, w]) => <span key={m} style={{ width: w }} className="shrink-0">{m}</span>)}
      </div>
      <MainToolbar />
      <div className="flex min-h-0 flex-1">
        <aside className="mr-[3px] flex w-[170px] shrink-0 flex-col">
          <Header title="Network Objects" />
          <div className="flex h-[516px] shrink-0 flex-col justify-between bg-[#d6dbe9]">
            <ObjectList />
            <div className="flex h-[14px] pl-[2px]">
              <Tab w={46} on>Network...</Tab>
              <Tab w={29}>Levels</Tab>
              <Tab w={45}>Backgrou...</Tab>
              <Tab w={46}>Project Ex...</Tab>
            </div>
          </div>
          <div className="mt-[4px] flex flex-1 flex-col">
            <Header title="Quick View" />
            <div className="flex h-[18px] items-center bg-[#d6dbe9] pl-[2px]"><FaWrench size={10.5} color="#999" /></div>
            <div className="flex-1 border border-[#8c8c8c] bg-white" />
            <div className="flex h-[16px] items-end bg-[#d6dbe9] pl-[2px] pt-[2px]">
              <Tab w={47} on>Quick View</Tab>
              <Tab w={46}>Smart Map</Tab>
            </div>
          </div>
        </aside>
        <main className="flex min-w-0 flex-1 flex-col">
          <div className="flex h-[369px] shrink-0">
            <Editor title="Network Editor" scale="5 m" barClass="w-[70px]"><MainHeat /></Editor>
          </div>
          <div className="mt-[4px] flex min-h-0 flex-1">
            <div className="mr-[3px] flex w-[547px] shrink-0">
              <Editor title="Network Editor (2)" scale="10 m" barClass="w-[83px]"><DensityHeat /></Editor>
            </div>
            <Editor title="Network Editor (3)" scale="10 m" barClass="w-[83px]" active><SpeedHeat /></Editor>
          </div>
        </main>
      </div>
      <footer className="flex h-[14px] shrink-0 items-center border-y border-[#7f90b4] bg-[#d6dbe9] pl-[2px] text-[7.700px] tracking-[-0.1px] text-[#555]">
        <span className="w-[233px]">-5.1:10.9</span>
        <span>System initialized!</span>
      </footer>
    </div>
  );
}
